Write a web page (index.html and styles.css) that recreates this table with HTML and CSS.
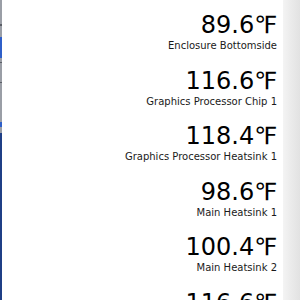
FILE: index.html
```html
<!DOCTYPE html>
<html>
<head>
<meta charset="utf-8">
<link rel="stylesheet" href="styles.css">
</head>
<body>
<div class="window">
  <div class="edge">
    <div class="seg grey s1"></div>
    <div class="seg dark s2"></div>
    <div class="seg grey s3"></div>
    <div class="seg blue s4"></div>
    <div class="seg grey s5"></div>
    <div class="seg dark s6"></div>
    <div class="seg grey s7"></div>
    <div class="seg dark s8"></div>
    <div class="seg grey s9"></div>
    <div class="seg blue s10"></div>
    <div class="seg grey s11"></div>
    <div class="seg navy s12"></div>
  </div>
  <div class="list">
    <div class="sensor"><div class="value">89.6℉</div><div class="label">Enclosure Bottomside</div></div>
    <div class="sensor"><div class="value">116.6℉</div><div class="label">Graphics Processor Chip 1</div></div>
    <div class="sensor"><div class="value">118.4℉</div><div class="label">Graphics Processor Heatsink 1</div></div>
    <div class="sensor"><div class="value">98.6℉</div><div class="label">Main Heatsink 1</div></div>
    <div class="sensor"><div class="value">100.4℉</div><div class="label">Main Heatsink 2</div></div>
    <div class="sensor"><div class="value">116.6℉</div><div class="label">Main Heatsink 3</div></div>
  </div>
  <div class="scrollbar"></div>
</div>
</body>
</html>
```
FILE: styles.css
```css
html, body {
  margin: 0;
  padding: 0;
  width: 300px;
  height: 300px;
  overflow: hidden;
  background: #fff;
}
.window {
  display: flex;
  width: 300px;
  height: 300px;
  font-family: "DejaVu Sans", sans-serif;
}
.edge {
  width: 2px;
  display: flex;
  flex-direction: column;
  flex: none;
}
.seg { flex: none; }
.grey { background: #9a9ea6; }
.dark { background: #5a5e66; }
.blue { background: #2f5fc9; }
.navy { background: #1f3f86; flex: 1; }
.s1 { height: 24px; }
.s2 { height: 2px; }
.s3 { height: 11px; }
.s4 { height: 21px; }
.s5 { height: 4px; }
.s6 { height: 1px; }
.s7 { height: 19px; }
.s8 { height: 1px; }
.s9 { height: 39px; }
.s10 { height: 5px; }
.s11 { height: 6px; }
.list {
  flex: 1;
  display: flex;
  flex-direction: column;
  align-items: flex-end;
  gap: 13.5px;
  padding: 12px 6px 0 0;
  overflow: hidden;
}
.sensor {
  display: flex;
  flex-direction: column;
  align-items: flex-end;
}
.value {
  font-size: 24px;
  line-height: 26px;
  color: #000;
  white-space: nowrap;
}
.label {
  font-size: 10px;
  line-height: 16px;
  color: #1a1a1a;
  white-space: nowrap;
}
.scrollbar {
  width: 17px;
  flex: none;
  background: linear-gradient(to right, #f4f4f4, #ececec 40%, #e2e2e2);
}
```
